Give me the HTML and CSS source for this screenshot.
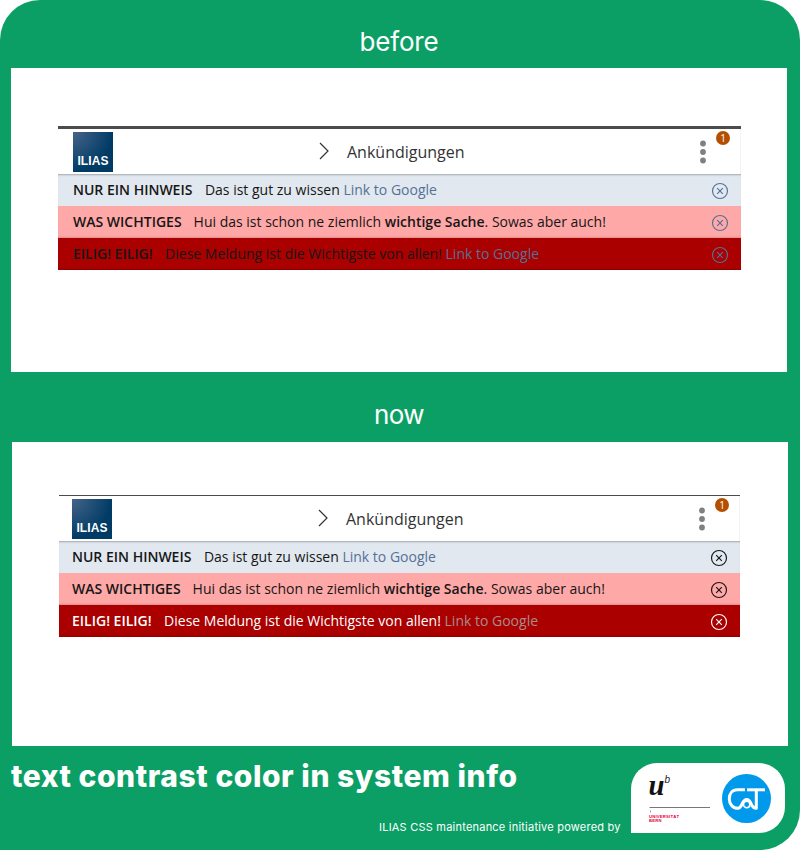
FILE: index.html
```html
<!DOCTYPE html>
<html lang="de">
<head>
<meta charset="utf-8">
<title>text contrast color in system info</title>
<link rel="stylesheet" href="styles.css">
</head>
<body>
<svg class="defs" aria-hidden="true">
  <symbol id="close" viewBox="0 0 18 18"><circle cx="9" cy="9" r="7.5"/><path d="M6.2 6.2l5.6 5.6M11.8 6.2l-5.6 5.6"/></symbol>
</svg>
<main class="card">
  <h2 class="label before-label">before</h2>
  <section class="panel before">
    <div class="shot">
      <header class="bar">
        <div class="ilias"><span>ILIAS</span></div>
        <svg class="chevron" viewBox="0 0 12 18"><path d="M2 1l8 8-8 8"/></svg>
        <span class="crumb">Ankündigungen</span>
        <svg class="dots" viewBox="0 0 6 24"><circle cx="3" cy="3.5" r="2.9"/><circle cx="3" cy="12" r="2.9"/><circle cx="3" cy="20.5" r="2.9"/></svg>
        <span class="badge">1</span>
      </header>
      <div class="row info"><b>NUR EIN HINWEIS</b><p>Das ist gut zu wissen <a>Link to Google</a></p><svg class="close"><use href="#close"/></svg></div>
      <div class="row warn"><b>WAS WICHTIGES</b><p>Hui das ist schon ne ziemlich <strong>wichtige Sache</strong>. Sowas aber auch!</p><svg class="close"><use href="#close"/></svg></div>
      <div class="row urgent"><b>EILIG! EILIG!</b><p>Diese Meldung ist die Wichtigste von allen! <a>Link to Google</a></p><svg class="close"><use href="#close"/></svg></div>
    </div>
  </section>
  <h2 class="label now-label">now</h2>
  <section class="panel now">
    <div class="shot">
      <header class="bar">
        <div class="ilias"><span>ILIAS</span></div>
        <svg class="chevron" viewBox="0 0 12 18"><path d="M2 1l8 8-8 8"/></svg>
        <span class="crumb">Ankündigungen</span>
        <svg class="dots" viewBox="0 0 6 24"><circle cx="3" cy="3.5" r="2.9"/><circle cx="3" cy="12" r="2.9"/><circle cx="3" cy="20.5" r="2.9"/></svg>
        <span class="badge">1</span>
      </header>
      <div class="row info"><b>NUR EIN HINWEIS</b><p>Das ist gut zu wissen <a>Link to Google</a></p><svg class="close"><use href="#close"/></svg></div>
      <div class="row warn"><b>WAS WICHTIGES</b><p>Hui das ist schon ne ziemlich <strong>wichtige Sache</strong>. Sowas aber auch!</p><svg class="close"><use href="#close"/></svg></div>
      <div class="row urgent"><b>EILIG! EILIG!</b><p>Diese Meldung ist die Wichtigste von allen! <a>Link to Google</a></p><svg class="close"><use href="#close"/></svg></div>
    </div>
  </section>
  <footer class="foot">
    <div class="words">
      <h1><svg width="540" height="50"><text x="0" y="30" textLength="506">text contrast color in system info</text></svg></h1>
      <p><svg width="246" height="20"><text x="0" y="14" textLength="241.500">ILIAS CSS maintenance initiative powered by</text></svg></p>
    </div>
    <div class="logos">
      <svg width="154" height="70" viewBox="0 0 154 70">
        <text class="u" x="17.500" y="32" textLength="16" lengthAdjust="spacingAndGlyphs">u</text>
        <text class="b" x="33.500" y="20">b</text>
        <path class="rule" d="M18.500 44.500H79"/>
        <path class="tick" d="M19.500 47.500v2"/>
        <text class="uni" x="18" y="54.700" textLength="30">UNIVERSITÄT</text>
        <text class="uni" x="18" y="59.400" textLength="12.500">BERN</text>
        <circle class="disc" cx="115.500" cy="35.500" r="24.500"/>
        <g class="cat">
          <path d="M114 26.800H106.500C101 26.800 98.300 31 98.300 35.700C98.300 41 101.500 45.300 107 45.300C111.500 45.300 110.500 36.500 115.700 36.500C121 36.500 119 45.300 125.300 45.300V27"/>
          <path d="M116 26.800h18"/>
          <path class="loop" d="M112.500 41.500a3.200 3.200 0 1 0 6.400 0a3.200 3.200 0 1 0-6.400 0"/>
        </g>
      </svg>
    </div>
  </footer>
</main>
</body>
</html>
```
FILE: styles.css
```css
* { box-sizing: border-box; margin: 0; padding: 0; }
body { width: 800px; height: 850px; background: #fff; overflow: hidden; font-family: "Open Sans", sans-serif; }
.defs { display: none; }
.card { width: 800px; height: 850px; background: #0c9f65; border-radius: 40px 40px 40px 0; display: flex; flex-direction: column; }
.label { color: #fff; font: 400 26px/34px Inter, sans-serif; letter-spacing: -.2px; text-align: center; }
.before-label { height: 68px; padding-top: 25px; padding-right: 2px; }
.now-label { height: 70px; padding-top: 26px; padding-right: 2px; letter-spacing: -.6px; }
.panel { width: 776px; height: 304px; background: #fff; }
.before { margin-left: 11px; padding: 58px 46px 0 47px; }
.now { margin-left: 12px; padding: 53px 48px 0 47px; }
.shot { border-top: 3px solid #4c4c4c; }
.now .shot { border-top-width: 1px; }
.bar { height: 45px; display: flex; position: relative; padding-left: 15px; border-right: 1px solid #f3f3f3; }
.now .bar { padding-left: 13px; }
.ilias { width: 40px; height: 40px; margin-top: 3px; background: radial-gradient(circle at 0 0, #466489, #003b65 70%); color: #fff; font: bold 12px/13px "Liberation Sans", sans-serif; letter-spacing: .1px; display: flex; align-items: flex-end; justify-content: center; padding-bottom: 4px; }
.chevron { width: 12px; height: 18px; margin: 13px 0 0 205px; fill: none; stroke: #333; stroke-width: 1.2; }
.crumb { font-size: 16px; line-height: 22px; color: #333; margin: 12px 0 0 17px; }
.dots { width: 6px; height: 24px; margin: 11px 34.500px 0 auto; fill: #808080; }
.badge { position: absolute; right: 10px; top: 2px; width: 14px; height: 14px; border-radius: 50%; background: #b54f00; color: #fff; font-size: 10px; line-height: 14px; text-align: center; }
.row { height: 32px; display: flex; align-items: center; padding: 0 12px 0 15px; font-size: 14px; line-height: 20px; color: #161616; white-space: nowrap; box-shadow: inset 0 2px 2px -1px rgba(0,0,0,.28); }
.now .row { padding-left: 13px; }
.row b, .row strong { font-weight: 600; }
.row p { margin-left: 12.500px; }
.row a { color: #557196; }
.info { background: #e1e8ef; }
.warn { background: #ffa8a8; box-shadow: inset 0 -2px 2px -1px rgba(0,0,0,.15); }
.row.warn { box-shadow: inset 0 -2px 2px -1px rgba(0,0,0,.15); }
.row.warn p { margin-left: 12px; }
.urgent { background: #a00; box-shadow: inset 0 -2px 2px -1px rgba(0,0,0,.15); }
.close { width: 18px; height: 18px; margin: 2px 0 0 auto; fill: none; stroke: #557196; stroke-width: 1.15; }
.now .close { stroke: #161616; }
.now .urgent { color: #fff; }
.now .urgent a { color: #a78d8a; }
.now .urgent .close { stroke: #fff; }
.foot { height: 104px; display: flex; padding-left: 11px; }
.words { width: 620px; height: 104px; display: flex; flex-direction: column; }
.words svg { display: block; overflow: visible; }
.words text { fill: #fff; }
.words h1 { height: 70px; padding-top: 11px; font: 800 30px Inter, sans-serif; }
.words p { padding-left: 368px; padding-top: 1px; font: 11px Inter, sans-serif; }
.logos { width: 154px; height: 70px; margin-top: 17px; background: #fff; border-radius: 26px 26px 26px 0; }
.logos svg { display: block; }
.u { font: italic bold 29px "Liberation Serif", serif; fill: #111; }
.b { font: italic 10px "Liberation Sans", sans-serif; fill: #222; }
.rule { stroke: #777; }
.tick { stroke: #888; stroke-width: .8; }
.uni { font: bold 4.200px "Liberation Sans", sans-serif; fill: #e4003c; }
.disc { fill: #0099eb; }
.cat { fill: none; stroke: #fff; stroke-width: 3; stroke-linejoin: round; }
.cat .loop { stroke-width: 1.6; }
```
